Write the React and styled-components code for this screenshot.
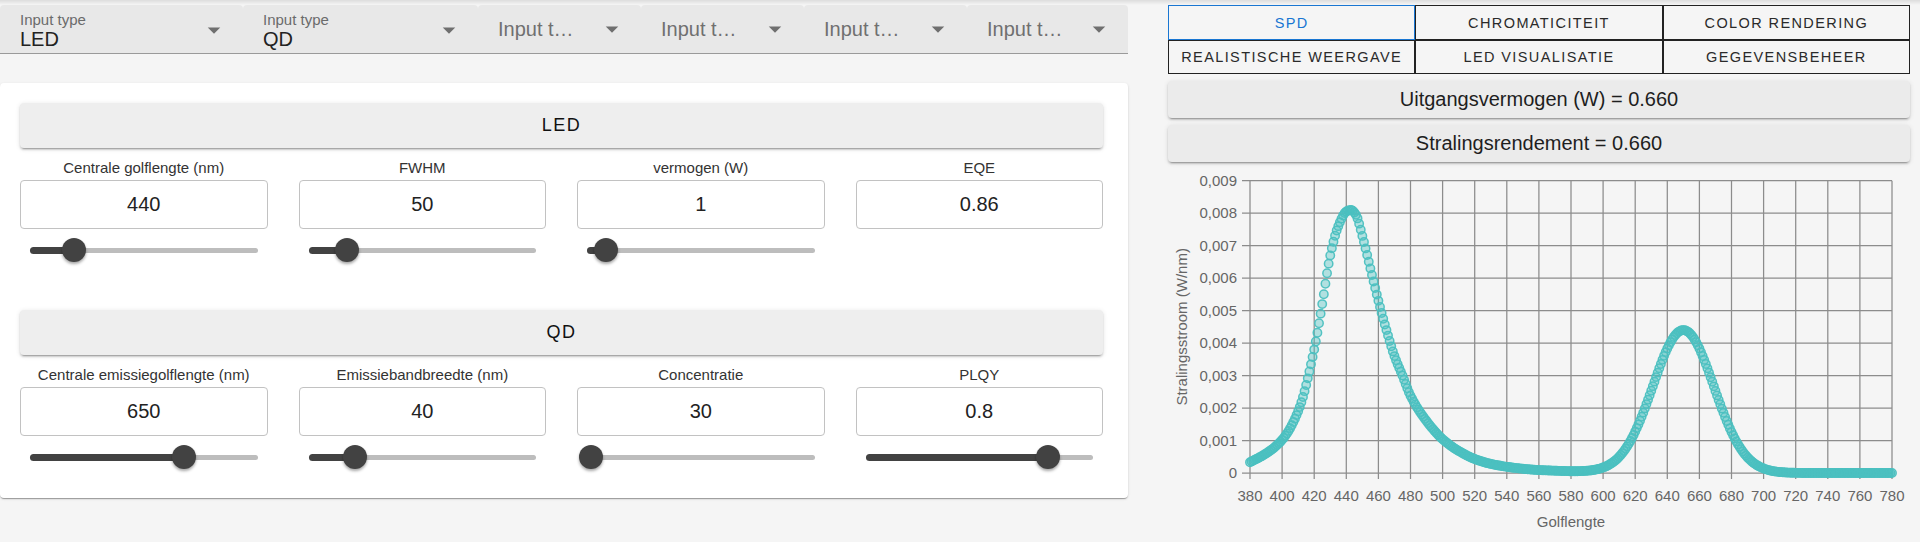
import React from 'react';
import styled, { createGlobalStyle } from 'styled-components';

const GlobalStyle = createGlobalStyle`
  html, body { margin: 0; padding: 0; background: #f5f5f5; }
  body {
    font-family: "Liberation Sans", Arial, Helvetica, sans-serif;
    width: 1920px; height: 542px; overflow: hidden;
  }
  *, *::before, *::after { box-sizing: border-box; }
`;

const Page = styled.div`
  width: 1920px;
  height: 542px;
  background: #f5f5f5;
  display: flex;
  flex-direction: column;
`;

const TopShade = styled.div`
  flex: none;
  height: 5px;
  background: linear-gradient(to bottom, rgba(0, 0, 0, 0.1), rgba(0, 0, 0, 0));
`;

const Main = styled.div`
  display: flex;
  align-items: flex-start;
  gap: 40px;
  padding-right: 10px;
`;

const LeftCol = styled.div`
  width: 1128px;
  flex: none;
  display: flex;
  flex-direction: column;
`;

const SelectBar = styled.div`
  display: flex;
  height: 49px;
`;

const Select = styled.div`
  width: ${(p) => p.$w}px;
  flex: none;
  height: 49px;
  background: #e8e8e8;
  border-bottom: 1px solid #9a9a9a;
  border-radius: 4px 4px 0 0;
  display: flex;
  align-items: ${(p) => (p.$filled ? 'flex-start' : 'center')};
  padding: ${(p) => (p.$filled ? '6px' : '0')} 14px 0 20px;
`;

const SelectContent = styled.div`
  flex: 1;
  min-width: 0;
  display: flex;
  flex-direction: column;
`;

const SelectLabel = styled.div`
  font-size: 15px;
  line-height: 17px;
  color: #6b6b6b;
  white-space: nowrap;
`;

const SelectValue = styled.div`
  font-size: 20px;
  line-height: 23px;
  color: #222;
`;

const Placeholder = styled.div`
  font-size: 20px;
  line-height: 23px;
  color: #707070;
  max-width: 80px;
  white-space: nowrap;
  overflow: hidden;
  text-overflow: ellipsis;
`;

const ArrowIcon = styled.svg`
  width: 30px;
  height: 30px;
  flex: none;
  fill: #6f6f6f;
  margin-top: ${(p) => (p.$filled ? '3.5px' : '0')};
`;

const Card = styled.div`
  margin-top: 29px;
  background: #ffffff;
  border-radius: 4px;
  box-shadow: 0 2px 1px -1px rgba(0, 0, 0, 0.2), 0 1px 1px 0 rgba(0, 0, 0, 0.14),
    0 1px 3px 0 rgba(0, 0, 0, 0.12);
  padding: 20px 25px 29px 20px;
  display: flex;
  flex-direction: column;
`;

const Section = styled.div`
  margin-top: ${(p) => p.$gap || 0}px;
`;

const SectionHeader = styled.div`
  height: 45px;
  background: #eeeeee;
  border-radius: 4px;
  box-shadow: 0 3px 1px -2px rgba(0, 0, 0, 0.2), 0 2px 2px 0 rgba(0, 0, 0, 0.14),
    0 1px 5px 0 rgba(0, 0, 0, 0.12);
  display: flex;
  align-items: center;
  justify-content: center;
  font-size: 18px;
  letter-spacing: 1.5px;
  color: #111;
`;

const FieldGrid = styled.div`
  margin-top: 11px;
  display: grid;
  grid-template-columns: repeat(4, 1fr);
  column-gap: 31px;
  align-items: start;
`;

const Field = styled.div`
  display: flex;
  flex-direction: column;
`;

const FieldLabel = styled.div`
  text-align: center;
  font-size: 15px;
  line-height: 18px;
  color: #333;
  margin-bottom: 3px;
  white-space: nowrap;
`;

const ValueBox = styled.div`
  height: 49px;
  border: 1px solid #c2c2c2;
  border-radius: 4px;
  background: #fff;
  display: flex;
  align-items: center;
  justify-content: center;
  font-size: 20px;
  color: #222;
`;

const SliderWrap = styled.div`
  margin-top: 9px;
  height: 24px;
  padding: 0 10px;
`;

const SliderTrackArea = styled.div`
  position: relative;
  height: 24px;
`;

const Rail = styled.div`
  position: absolute;
  left: 0;
  right: 0;
  top: 9.5px;
  height: 5px;
  border-radius: 3px;
  background: #bdbdbd;
`;

const Track = styled.div`
  position: absolute;
  left: 0;
  top: 8.5px;
  height: 7px;
  border-radius: 4px;
  background: #424242;
`;

const Thumb = styled.div`
  position: absolute;
  top: 0;
  width: 24px;
  height: 24px;
  margin-left: -12px;
  border-radius: 50%;
  background: #424242;
  box-shadow: 0 2px 3px rgba(0, 0, 0, 0.35);
`;

const RightCol = styled.div`
  width: 742px;
  flex: none;
  display: flex;
  flex-direction: column;
`;

const TabGrid = styled.div`
  display: grid;
  grid-template-columns: repeat(3, 1fr);
  grid-template-rows: 35px 34px;
`;

const Tab = styled.div`
  border: 1px solid ${(p) => (p.$active ? '#1976d2' : '#222')};
  display: flex;
  align-items: center;
  justify-content: center;
  font-size: 14.5px;
  letter-spacing: 1.4px;
  text-transform: uppercase;
  color: ${(p) => (p.$active ? '#1976d2' : '#2a2a2a')};
  white-space: nowrap;
`;

const StatButton = styled.div`
  margin-top: 7px;
  height: 37px;
  background: #ebebeb;
  border-radius: 4px;
  box-shadow: 0 3px 1px -2px rgba(0, 0, 0, 0.2), 0 2px 2px 0 rgba(0, 0, 0, 0.14),
    0 1px 5px 0 rgba(0, 0, 0, 0.12);
  display: flex;
  align-items: center;
  justify-content: center;
  font-size: 20px;
  color: #1e1e1e;
`;

const ChartSvg = styled.svg`
  display: block;
  width: 742px;
  height: 379px;
  font-family: "Liberation Sans", Arial, Helvetica, sans-serif;
`;

/* ---------- data ---------- */

function monotone(xs, ys) {
  const n = xs.length;
  const d = [];
  const m = new Array(n);
  for (let i = 0; i < n - 1; i++) d[i] = (ys[i + 1] - ys[i]) / (xs[i + 1] - xs[i]);
  m[0] = d[0];
  m[n - 1] = d[n - 2];
  for (let i = 1; i < n - 1; i++) {
    if (d[i - 1] * d[i] <= 0) m[i] = 0;
    else {
      const h0 = xs[i] - xs[i - 1];
      const h1 = xs[i + 1] - xs[i];
      const w1 = 2 * h1 + h0;
      const w2 = h1 + 2 * h0;
      m[i] = (w1 + w2) / (w1 / d[i - 1] + w2 / d[i]);
    }
  }
  return (x) => {
    let k = 0;
    while (k < n - 2 && x > xs[k + 1]) k++;
    const h = xs[k + 1] - xs[k];
    const t = (x - xs[k]) / h;
    const t2 = t * t;
    const t3 = t2 * t;
    return (
      (2 * t3 - 3 * t2 + 1) * ys[k] +
      (t3 - 2 * t2 + t) * h * m[k] +
      (-2 * t3 + 3 * t2) * ys[k + 1] +
      (t3 - t2) * h * m[k + 1]
    );
  };
}

const ledSamples = [
  [380, 0.00033], [390, 0.0006], [400, 0.00102], [410, 0.0019], [420, 0.0038],
  [425, 0.0052], [430, 0.0067], [435, 0.0076], [440, 0.00805], [443, 0.0081],
  [446, 0.00795], [450, 0.0073], [455, 0.0063], [460, 0.0053], [465, 0.0044],
  [470, 0.0036], [475, 0.003], [480, 0.00238], [490, 0.0016], [500, 0.00104],
  [510, 0.00068], [520, 0.00043], [530, 0.00028], [540, 0.00019], [550, 0.00013],
  [560, 0.00009], [570, 0.00007], [580, 0.00005], [600, 0.00003], [620, 0.00001], [650, 0], [780, 0],
];
const ledFn = monotone(ledSamples.map((s) => s[0]), ledSamples.map((s) => s[1]));
const qdFn = (l) => 0.0044 * Math.exp(-((l - 650) ** 2) / (2 * 19 * 19));

const spectrum = [];
for (let l = 380; l <= 780; l++) spectrum.push([l, Math.max(0, ledFn(l)) + qdFn(l)]);

/* ---------- chart ---------- */

const PL = 82;
const PR = 724;
const PT = 18.7;
const PB = 311;
const sx = (l) => PL + ((l - 380) / 400) * (PR - PL);
const sy = (v) => PB - (v / 0.009) * (PB - PT);

function SpdChart() {
  const xTicks = [];
  for (let l = 380; l <= 780; l += 20) xTicks.push(l);
  const yTicks = [];
  for (let i = 0; i <= 9; i++) yTicks.push(i);
  const gridColor = '#8c8c8c';
  return (
    <ChartSvg viewBox="0 0 742 379">
      {yTicks.map((i) => (
        <line key={'h' + i} x1={PL - 8} x2={PR} y1={sy(i / 1000)} y2={sy(i / 1000)} stroke={gridColor} strokeWidth="1.25" />
      ))}
      {xTicks.map((l) => (
        <line key={'v' + l} x1={sx(l)} x2={sx(l)} y1={PT} y2={PB + 6} stroke={gridColor} strokeWidth="1.25" />
      ))}
      {yTicks.map((i) => (
        <text key={'yl' + i} x={PL - 13} y={sy(i / 1000) + 5.2} fontSize="15" fill="#666" textAnchor="end">
          {i === 0 ? '0' : '0,00' + i}
        </text>
      ))}
      {xTicks.map((l) => (
        <text key={'xl' + l} x={sx(l)} y={PB + 27.7} fontSize="15" fill="#666" textAnchor="middle">
          {l}
        </text>
      ))}
      <text x={(PL + PR) / 2} y={365} fontSize="15" fill="#666" textAnchor="middle">
        Golflengte
      </text>
      <text
        transform={`translate(19, ${(PT + PB) / 2}) rotate(-90)`}
        fontSize="15"
        fill="#666"
        textAnchor="middle"
      >
        Stralingsstroom (W/nm)
      </text>
      {spectrum.map(([l, v]) => (
        <circle
          key={'p' + l}
          cx={sx(l)}
          cy={sy(v)}
          r="4.2"
          fill="rgba(75,192,192,0.4)"
          stroke="rgba(75,192,192,0.95)"
          strokeWidth="1.5"
        />
      ))}
    </ChartSvg>
  );
}

/* ---------- parts ---------- */

function Arrow({ filled }) {
  return (
    <ArrowIcon viewBox="0 0 24 24" $filled={filled}>
      <path d="M7 10l5 5 5-5z" />
    </ArrowIcon>
  );
}

function InputSelect({ w, value }) {
  if (value) {
    return (
      <Select $w={w} $filled>
        <SelectContent>
          <SelectLabel>Input type</SelectLabel>
          <SelectValue>{value}</SelectValue>
        </SelectContent>
        <Arrow filled />
      </Select>
    );
  }
  return (
    <Select $w={w}>
      <SelectContent>
        <Placeholder>Input type</Placeholder>
      </SelectContent>
      <Arrow />
    </Select>
  );
}

function Slider({ pct }) {
  return (
    <SliderWrap>
      <SliderTrackArea>
        <Rail />
        <Track style={{ width: `${pct * 100}%` }} />
        <Thumb style={{ left: `${pct * 100}%` }} />
      </SliderTrackArea>
    </SliderWrap>
  );
}

function ParamField({ label, value, pct }) {
  return (
    <Field>
      <FieldLabel>{label}</FieldLabel>
      <ValueBox>{value}</ValueBox>
      {pct !== undefined && <Slider pct={pct} />}
    </Field>
  );
}

const ledFields = [
  { label: 'Centrale golflengte (nm)', value: '440', pct: 0.193 },
  { label: 'FWHM', value: '50', pct: 0.168 },
  { label: 'vermogen (W)', value: '1', pct: 0.082 },
  { label: 'EQE', value: '0.86' },
];

const qdFields = [
  { label: 'Centrale emissiegolflengte (nm)', value: '650', pct: 0.675 },
  { label: 'Emissiebandbreedte (nm)', value: '40', pct: 0.206 },
  { label: 'Concentratie', value: '30', pct: 0.018 },
  { label: 'PLQY', value: '0.8', pct: 0.8 },
];

const selects = [
  { w: 243, value: 'LED' },
  { w: 235, value: 'QD' },
  { w: 163 },
  { w: 163 },
  { w: 163 },
  { w: 161 },
];

const tabs = [
  { label: 'SPD', active: true },
  { label: 'Chromaticiteit' },
  { label: 'Color rendering' },
  { label: 'Realistische weergave' },
  { label: 'LED visualisatie' },
  { label: 'Gegevensbeheer' },
];

export default function App() {
  return (
    <>
      <GlobalStyle />
      <Page>
        <TopShade />
        <Main>
          <LeftCol>
            <SelectBar>
              {selects.map((s, i) => (
                <InputSelect key={i} w={s.w} value={s.value} />
              ))}
            </SelectBar>
            <Card>
              <Section>
                <SectionHeader>LED</SectionHeader>
                <FieldGrid>
                  {ledFields.map((f) => (
                    <ParamField key={f.label} {...f} />
                  ))}
                </FieldGrid>
              </Section>
              <Section $gap={48}>
                <SectionHeader>QD</SectionHeader>
                <FieldGrid>
                  {qdFields.map((f) => (
                    <ParamField key={f.label} {...f} />
                  ))}
                </FieldGrid>
              </Section>
            </Card>
          </LeftCol>
          <RightCol>
            <TabGrid>
              {tabs.map((t) => (
                <Tab key={t.label} $active={t.active}>
                  {t.label}
                </Tab>
              ))}
            </TabGrid>
            <StatButton>Uitgangsvermogen (W) = 0.660</StatButton>
            <StatButton>Stralingsrendement = 0.660</StatButton>
            <SpdChart />
          </RightCol>
        </Main>
      </Page>
    </>
  );
}
